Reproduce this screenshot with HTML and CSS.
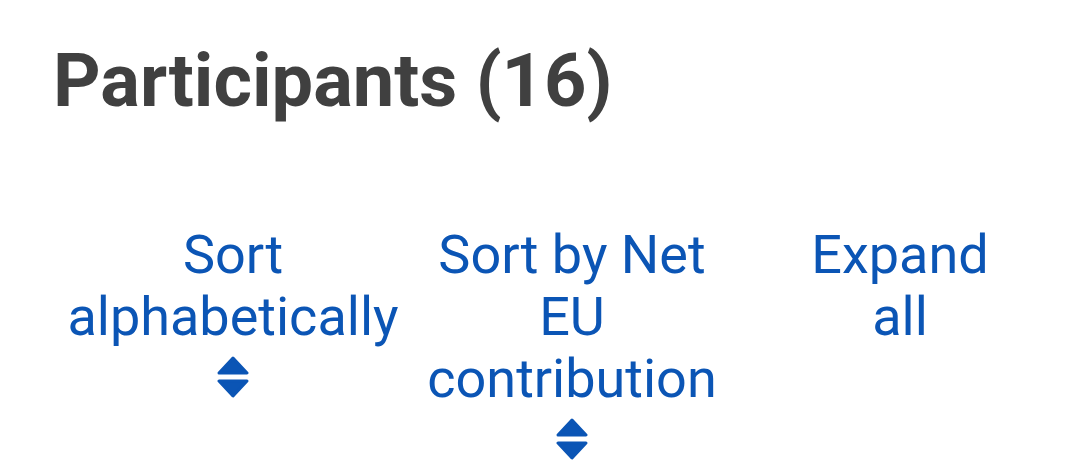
FILE: index.html
```html
<!DOCTYPE html>
<html lang="en">
<head>
  <meta charset="UTF-8">
  <meta name="viewport" content="width=device-width, initial-scale=1">
  <title>Participants</title>
  <link rel="stylesheet" href="styles.css">
</head>
<body>
  <div class="participants">
    <h2 class="title">Participants (16)</h2>

    <div class="actions">
      <a href="#" class="action action-alpha">
        Sort alphabetically
        <svg class="sort-icon" viewBox="0 0 32 42" width="32" height="42" aria-hidden="true">
          <polygon points="16,2 30,17 2,17" />
          <polygon points="2,25 30,25 16,40" />
        </svg>
      </a>
      <a href="#" class="action action-net">
        Sort by Net EU contribution
        <svg class="sort-icon" viewBox="0 0 32 42" width="32" height="42" aria-hidden="true">
          <polygon points="16,2 30,17 2,17" />
          <polygon points="2,25 30,25 16,40" />
        </svg>
      </a>
      <a href="#" class="action action-expand">Expand all</a>
    </div>
  </div>
</body>
</html>
```

FILE: styles.css
```css
body {
  margin: 0;
  font-family: Roboto, 'Noto Sans', sans-serif;
  background: #ffffff;
}
.participants {
  padding: 35px 0 0 53px;
}
.title {
  margin: 0;
  font-size: 74px;
  font-weight: 700;
  color: #404040;
  line-height: 92px;
}
.actions {
  display: flex;
  align-items: flex-start;
  gap: 14px;
  margin-top: 97px;
  margin-left: 10px;
}
.action {
  display: flex;
  flex-direction: column;
  align-items: center;
  text-align: center;
  font-size: 54px;
  line-height: 62px;
  color: #0b55b5;
  text-decoration: none;
}
.action-alpha {
  width: 340px;
}
.action-net {
  width: 310px;
}
.action-expand {
  width: 200px;
  margin-left: 59px;
}
.sort-icon {
  margin-top: 8px;
  fill: #0b55b5;
  stroke: #0b55b5;
  stroke-width: 3;
  stroke-linejoin: round;
}
```
